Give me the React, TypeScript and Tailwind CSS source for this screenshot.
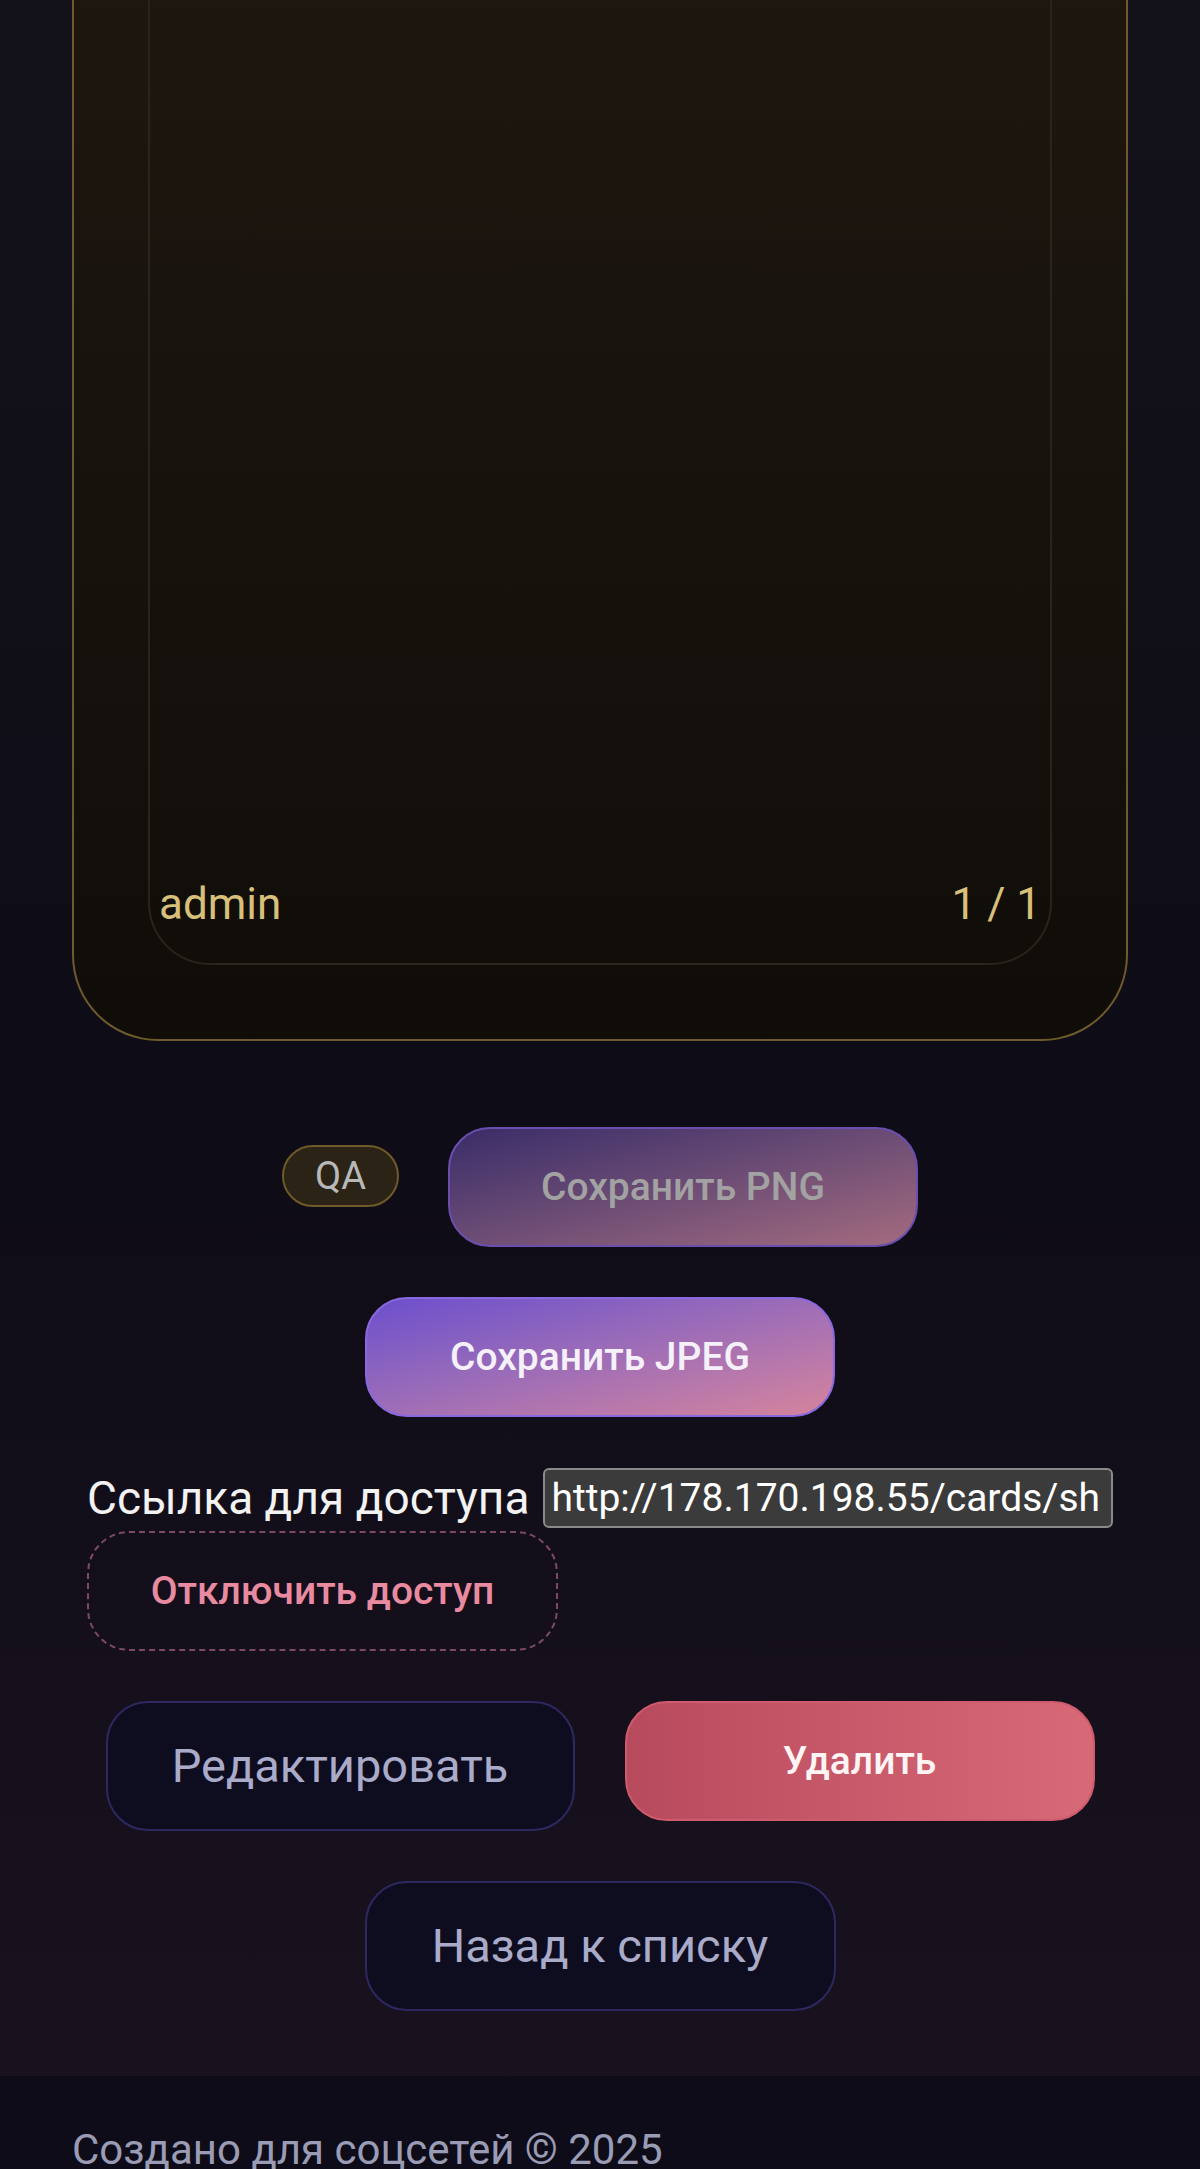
import React from 'react';

const font = { fontFamily: 'Roboto, "Noto Sans", sans-serif' };

const CardPreview: React.FC = () => (
  <div className="h-[1041px] rounded-b-[86px] border-x-2 border-b-2 border-[#6e5a2a] bg-gradient-to-b from-[#1e1710] to-[#100d09] px-[74px] pb-[74px]">
    <div className="flex h-full flex-col justify-end rounded-b-[62px] border-x-2 border-b-2 border-[#29241c] px-[9px] pb-[26px]">
      <div className="flex items-center justify-between text-[44px] text-[#d8c07a]">
        <span>admin</span>
        <span>1 / 1</span>
      </div>
    </div>
  </div>
);

const App: React.FC = () => {
  return (
    <div className="min-h-screen bg-gradient-to-b from-[#13121a] via-[#0e0c16] to-[#1b1320]" style={font}>
      <main className="px-[72px]">
        <CardPreview />

        {/* Export */}
        <div className="mt-[86px] flex flex-wrap justify-center gap-x-[49px] gap-y-[50px]">
          <span className="mt-[18px] flex h-[62px] w-[117px] items-center justify-center rounded-full border-2 border-[#6f5a28] bg-[#2a2316] text-[38px] text-[#b8b8b8]">
            QA
          </span>
          <button className="h-[120px] w-[470px] rounded-[42px] border-2 border-[#6a4fb0] bg-gradient-to-br from-[#3a2c68] to-[#a46b7e] text-[39px] font-medium text-[#a2a2a2]">
            Сохранить PNG
          </button>
          <button className="h-[120px] w-[470px] rounded-[42px] border-2 border-[#8a68df] bg-gradient-to-br from-[#6c4ecc] to-[#d6839b] text-[39px] font-medium text-[#f5f0fa]">
            Сохранить JPEG
          </button>
        </div>

        {/* Share link */}
        <div className="mt-[51px] px-[15px]">
          <div className="flex h-[60px] items-center gap-[14px]">
            <span className="whitespace-nowrap text-[46px] leading-none text-[#f2f2f2]">Ссылка для доступа</span>
            <input
              readOnly
              value="http://178.170.198.55/cards/sh"
              className="h-[60px] min-w-0 flex-1 rounded-[6px] border-2 border-[#8a8a8a] bg-[#3b3b3b] px-[6px] text-[39px] text-white outline-none"
            />
          </div>
          <button className="mt-[3px] h-[120px] w-[471px] rounded-[42px] border-2 border-dashed border-[#7c4a64] text-[39px] font-medium text-[#e88aa0]">
            Отключить доступ
          </button>
        </div>

        {/* Manage */}
        <div className="mt-[50px] flex items-start justify-center gap-[50px]">
          <button className="h-[130px] w-[469px] rounded-[42px] border-2 border-[#2d2860] bg-[#0e0d20] text-[47px] text-[#a9abc9]">
            Редактировать
          </button>
          <button className="h-[120px] w-[470px] rounded-[42px] border-2 border-[#d05a6e] bg-gradient-to-r from-[#b84a5e] to-[#d86977] text-[39px] font-medium text-[#fff4f4]">
            Удалить
          </button>
        </div>

        <div className="mt-[50px] flex justify-center pb-[65px]">
          <button className="h-[130px] w-[471px] rounded-[42px] border-2 border-[#2d2860] bg-[#0e0d20] text-[47px] text-[#a9abc9]">
            Назад к списку
          </button>
        </div>
      </main>

      <footer className="bg-[#0e0c18] px-[72px] pb-[40px] pt-[42px]">
        <p className="text-[42px] text-[#9a9cb6]">Создано для соцсетей © 2025</p>
      </footer>
    </div>
  );
};

export default App;
